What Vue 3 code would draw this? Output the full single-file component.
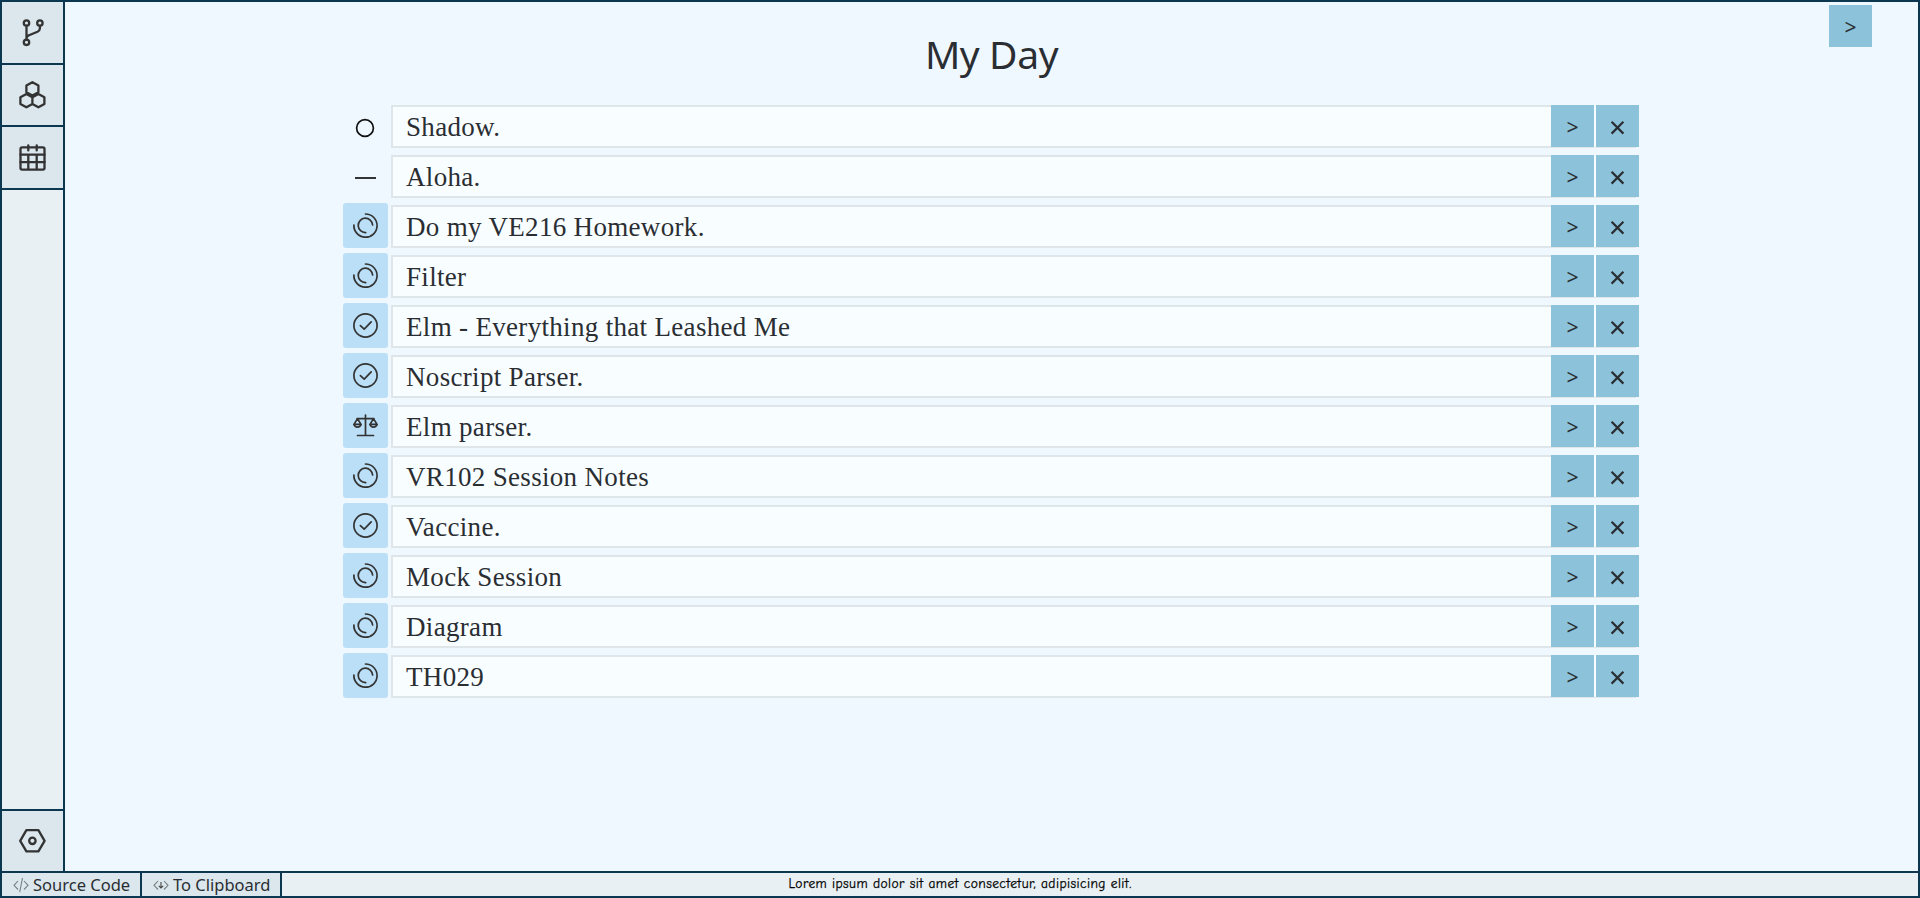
<script setup>
const rows = [
  { text: 'Shadow.', kind: 'circle' },
  { text: 'Aloha.', kind: 'dash' },
  { text: 'Do my VE216 Homework.', kind: 'progress' },
  { text: 'Filter', kind: 'progress' },
  { text: 'Elm - Everything that Leashed Me', kind: 'done' },
  { text: 'Noscript Parser.', kind: 'done' },
  { text: 'Elm parser.', kind: 'scale' },
  { text: 'VR102 Session Notes', kind: 'progress' },
  { text: 'Vaccine.', kind: 'done' },
  { text: 'Mock Session', kind: 'progress' },
  { text: 'Diagram', kind: 'progress' },
  { text: 'TH029', kind: 'progress' },
]
</script>

<template>
  <div class="app">
    <div class="body">
      <nav class="side">
        <button class="nav first">
          <svg width="30" height="30" viewBox="0 0 30 30" class="ico">
            <circle cx="9.5" cy="6" r="2.7" /><circle cx="22.9" cy="6" r="2.7" /><circle cx="9.5" cy="25.3" r="2.7" />
            <path d="M9.5 8.9V22.4M22.9 8.9V11.6Q22.9 13.6 20.5 14.7L12 18.3Q9.5 19.4 9.5 21.4" />
          </svg>
        </button>
        <button class="nav second">
          <svg width="30" height="30" viewBox="0 0 30 30" class="ico">
            <path d="M15.4 2.2L21.4 5.6V12.2L15.4 15.6L9.4 12.2V5.6ZM9.4 13.9L15.4 17.3V23.9L9.4 27.3L3.4 23.9V17.3ZM21.4 13.9L27.4 17.3V23.9L21.4 27.3L15.4 23.9V17.3Z" />
          </svg>
        </button>
        <button class="nav third">
          <svg width="30" height="30" viewBox="0 0 30 30" class="ico">
            <rect x="3.5" y="5.4" width="24" height="22.2" rx="1.6" />
            <path d="M3.5 12.7H27.5M3.5 20.2H27.5M11.3 12.7V27M19.7 12.7V27M11.3 3.4V8.4M19.7 3.4V8.4" />
          </svg>
        </button>
        <div class="spacer"></div>
        <button class="nav last">
          <svg width="30" height="30" viewBox="0 0 30 30" class="ico">
            <path d="M9.4 4.2H21.4L27.6 14.8L21.4 25.4H9.4L3.2 14.8Z" /><circle cx="15.4" cy="14.8" r="3.2" />
          </svg>
        </button>
      </nav>
      <main class="main">
        <button class="act toggle">&gt;</button>
        <h1>My Day</h1>
        <ul class="list">
          <li v-for="row in rows" :key="row.text" class="row">
            <span class="state" :class="{ boxed: row.kind !== 'circle' && row.kind !== 'dash' }">
              <svg width="45" height="45" viewBox="0 0 45 45" class="glyph" :class="row.kind">
                <circle v-if="row.kind === 'circle'" cx="22" cy="25" r="8.4" />
                <path v-else-if="row.kind === 'dash'" d="M12 25H33" />
                <template v-else-if="row.kind === 'progress'">
                  <path d="M22.5 11A11.6 11.6 0 1 1 10.9 22" />
                  <path d="M29.6 22A7.2 7.2 0 1 0 22.7 29.6" />
                </template>
                <template v-else-if="row.kind === 'done'">
                  <circle cx="22.5" cy="22.5" r="11.6" /><path d="M17.4 22.6L21.2 26.2L28.2 18.9" />
                </template>
                <template v-else>
                  <path d="M22.5 12V32.5M14.5 32.5H30.5M14 15.6H31M14.5 15.6L11 21.4A3.6 3.6 0 0 0 18 21.4ZM30.5 15.6L27 21.4A3.6 3.6 0 0 0 34 21.4ZM10.8 21.4H18.2M26.8 21.4H34.2" />
                </template>
              </svg>
            </span>
            <div class="field">
              <span class="text">{{ row.text }}</span>
              <button class="act">&gt;</button>
              <button class="act close">
                <svg width="43" height="42" viewBox="0 0 43 42"><path d="M15.6 16.8L27.4 28.6M27.4 16.8L15.6 28.6" /></svg>
              </button>
            </div>
          </li>
        </ul>
      </main>
    </div>
    <footer class="foot">
      <button class="tool">
        <svg width="16" height="16" viewBox="0 0 16 16"><path d="M5 4L1 8.3L5 12.5M11 4L15 8.3L11 12.5M9.5 1L6.7 15.2" /></svg>
        <span>Source Code</span>
      </button>
      <button class="tool">
        <svg width="16" height="16" viewBox="0 0 16 16"><path d="M5 4L1 8.3L5 12.5M11 4L15 8.3L11 12.5" /><path class="arrow" d="M8 5V11M5.8 8.8L8 11L10.2 8.8" /></svg>
        <span>To Clipboard</span>
      </button>
      <p class="message">Lorem ipsum dolor sit amet consectetur, adipisicing elit.</p>
    </footer>
  </div>
</template>

<style>
body { margin: 0; overflow: hidden; }
</style>

<style scoped>
* { box-sizing: border-box; }
.app {
  width: 1920px; height: 898px; display: flex; flex-direction: column;
  border: 2px solid #0b3750; background: #f0f8ff; color: #2a2e33;
  font-family: "Noto Sans", sans-serif;
}
button { border: 0; padding: 0; margin: 0; color: inherit; font: inherit; }
.body { display: flex; height: 869px; }
.side { width: 63px; display: flex; flex-direction: column; background: #e8f0f3; border-right: 2px solid #0b3750; }
.nav { display: flex; align-items: center; justify-content: center; padding: 0 1px 1px 0; background: #dbe7ec; border-bottom: 2px solid #0b3750; }
.first { height: 63px; }
.second { height: 62px; }
.third { height: 63px; }
.last { height: 62px; border-top: 2px solid #0b3750; border-bottom: 0; }
.spacer { flex: 1; }
.ico { fill: none; stroke: #333; stroke-width: 2.3; stroke-linejoin: round; stroke-linecap: round; }
.main { flex: 1; position: relative; }
.act {
  width: 43px; height: 42px; flex: none; display: flex; align-items: center; justify-content: center;
  background: #8cc3da; font-size: 21px; line-height: 42px; padding-top: 2px;
}
.toggle { position: absolute; top: 3px; right: 46px; }
h1 { margin: 0; padding-top: 24px; height: 103px; font-size: 39px; font-weight: 400; line-height: 56px; text-align: center; letter-spacing: -0.4px; }
.list { list-style: none; margin: 0 0 0 278px; padding: 0; }
.row { display: flex; height: 50px; }
.state { width: 45px; height: 45px; margin: -2px 3px 0 0; border-radius: 3px; }
.boxed { background: #bcdff8; }
.glyph { display: block; fill: none; stroke: #333; stroke-width: 1.7; stroke-linecap: round; stroke-linejoin: round; }
.circle, .dash { stroke: #111; stroke-width: 1.7; stroke-linecap: butt; }
.field {
  width: 1245px; height: 43px; display: flex; background: #f8fdff;
  box-shadow: inset 0 0 0 2px #dfe6ea;
}
.text { width: 1160px; flex: none; padding-left: 15px; font: 27px/45px "Liberation Serif", serif; letter-spacing: 0.32px; white-space: pre; }
.close { width: 45px; border-left: 2px solid #f8fdff; padding: 0; }
.close svg { fill: none; stroke: #2a2e33; stroke-width: 2.2; }
.foot { position: relative; height: 25px; display: flex; border-top: 2px solid #0b3750; background: #e8f0f3; }
.tool {
  width: 140px; height: 23px; display: flex; align-items: center; gap: 4px; padding-left: 11px;
  background: #dbe7ec; border-right: 2px solid #0b3750; font-size: 16.5px; line-height: 23px; white-space: nowrap;
}
.tool svg { flex: none; fill: none; stroke: #777f84; stroke-width: 1.1; margin-top: 1px; }
.tool .arrow { stroke: #444; stroke-width: 1.1; }
.message {
  position: absolute; left: 0; right: 0; margin: 0; text-align: center; color: #000;
  font: 500 13.5px/21px "Comic Sans MS", "Comic Neue", cursive; letter-spacing: 0.42px; -webkit-text-stroke: 0.25px #000;
}
</style>
